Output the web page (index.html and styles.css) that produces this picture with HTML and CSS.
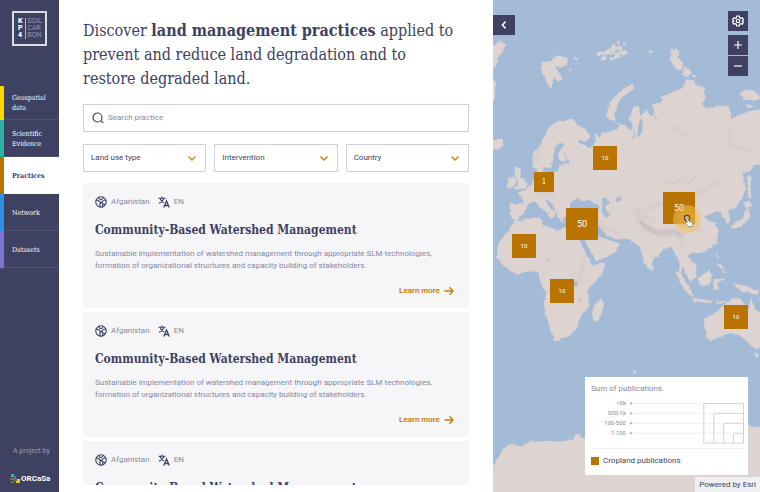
FILE: index.html
```html
<!DOCTYPE html>
<html lang="en">
<head>
<meta charset="utf-8">
<meta name="viewport" content="width=device-width, initial-scale=1">
<title>Soil Carbon – Practices</title>
<link rel="stylesheet" href="styles.css">
</head>
<body>
<svg class="sprite" aria-hidden="true">
  <symbol id="i-globe" viewBox="0 0 24 24"><g fill="none" stroke="currentColor" stroke-width="2.200" stroke-linejoin="round" stroke-linecap="round"><circle cx="12" cy="12" r="10.500"/><path d="M2.500 8l5 1.500 4.500 4.500-2.500 2.500 1 5.500M7.500 2.500l1.500 3.500 4 1.500 3.500-5M21.500 8.500l-4.500 0-3 3.500 2 4 4.500 1M12 14l2-2M16 16l-1.500 6"/></g></symbol>
  <symbol id="i-lang" viewBox="0 0 24 24"><g fill="none" stroke="currentColor" stroke-width="2.200"><path d="M1 4.500h14M8 1v3.500M12 5c-1.500 4-5 7.500-10 9.500M4 5c1.500 4 4 7 8 8.500"/><path d="M11.500 23l5.500-13 5.500 13M13.500 19h7" stroke-width="2.600"/></g></symbol>
  <symbol id="i-chev" viewBox="0 0 10 10"><path d="M1.500 3.500L5 7l3.500-3.500" fill="none" stroke="currentColor" stroke-width="1.500"/></symbol>
  <symbol id="i-arrow" viewBox="0 0 10 10"><path d="M.5 5h8.500M5.500 1.200L9.200 5 5.500 8.800" fill="none" stroke="currentColor" stroke-width="1.300"/></symbol>
</svg>
<div class="app">
  <aside class="sidebar">
    <a class="logo" href="#" aria-label="KP4 Soil Carbon">
      <span class="logo-key"><span>K</span><span>P</span><span>4</span></span>
      <span class="logo-name"><span>SOIL</span><span>CAR</span><span>BON</span></span>
    </a>
    <nav class="nav">
      <a class="nav-item geo" href="#">Geospatial data</a>
      <a class="nav-item sci" href="#">Scientific Evidence</a>
      <a class="nav-item prac active" href="#" aria-current="page">Practices</a>
      <a class="nav-item net" href="#">Network</a>
      <a class="nav-item data" href="#">Datasets</a>
    </nav>
    <div class="credit">
      <span class="credit-by">A project by</span>
      <a class="orcasa" href="#">
        <svg viewBox="0 0 10 10" aria-hidden="true"><path fill="#35b7b2" d="M1 0h3v3H1z"/><path fill="#4a7f9c" d="M4 2h2v3H4z"/><path fill="#9a6a3c" d="M0 4h4v2H0zM1 7h3v2H1z"/><path fill="#3d8f4c" d="M4 5h3v2H4z"/><path fill="#efc51c" d="M7 5h3v4H6V7h1z"/></svg>
        <span>ORCaSa</span>
      </a>
    </div>
  </aside>

  <main class="content">
    <h1>Discover <strong>land management practices</strong> applied to prevent and reduce land degradation and to restore degraded land.</h1>
    <label class="search">
      <svg viewBox="0 0 12 12" aria-hidden="true"><g fill="none" stroke="currentColor" stroke-width="1.200"><circle cx="5.500" cy="5.500" r="4.500"/><path d="M8.700 8.700l2.500 2.500"/></g></svg>
      <input type="search" placeholder="Search practice" aria-label="Search practice">
    </label>
    <div class="filters">
      <div class="filter"><select aria-label="Land use type"><option>Land use type</option></select><svg aria-hidden="true"><use href="#i-chev"/></svg></div>
      <div class="filter"><select aria-label="Intervention"><option>Intervention</option></select><svg aria-hidden="true"><use href="#i-chev"/></svg></div>
      <div class="filter"><select aria-label="Country"><option>Country</option></select><svg aria-hidden="true"><use href="#i-chev"/></svg></div>
    </div>
    <div class="cards">
      <article class="card">
        <div class="meta"><svg aria-hidden="true"><use href="#i-globe"/></svg><span>Afganistan</span><svg aria-hidden="true"><use href="#i-lang"/></svg><span>EN</span></div>
        <h2>Community-Based Watershed Management</h2>
        <p>Sustainable implementation of watershed management through appropriate SLM technologies, formation of organizational structures and capacity building of stakeholders.</p>
        <a class="more" href="#">Learn more<svg aria-hidden="true"><use href="#i-arrow"/></svg></a>
      </article>
      <article class="card">
        <div class="meta"><svg aria-hidden="true"><use href="#i-globe"/></svg><span>Afganistan</span><svg aria-hidden="true"><use href="#i-lang"/></svg><span>EN</span></div>
        <h2>Community-Based Watershed Management</h2>
        <p>Sustainable implementation of watershed management through appropriate SLM technologies, formation of organizational structures and capacity building of stakeholders.</p>
        <a class="more" href="#">Learn more<svg aria-hidden="true"><use href="#i-arrow"/></svg></a>
      </article>
      <article class="card">
        <div class="meta"><svg aria-hidden="true"><use href="#i-globe"/></svg><span>Afganistan</span><svg aria-hidden="true"><use href="#i-lang"/></svg><span>EN</span></div>
        <h2>Community-Based Watershed Management</h2>
      </article>
    </div>
  </main>

  <section class="map" aria-label="Map of publications">
    <svg class="world" viewBox="9 0 801 1476" preserveAspectRatio="xMidYMid slice" aria-hidden="true">
      <defs>
        <filter id="coast" x="-5%" y="-5%" width="110%" height="110%" color-interpolation-filters="sRGB"><feTurbulence type="fractalNoise" baseFrequency=".07" numOctaves="2" seed="4"/><feDisplacementMap in="SourceGraphic" scale="10" xChannelSelector="R" yChannelSelector="G"/></filter>
        <filter id="soft"><feGaussianBlur stdDeviation="4"/></filter>
      </defs>
      <g filter="url(#coast)">
        <g fill="#ddd3d1" stroke="#ddd3d1" stroke-width="3" stroke-linejoin="round">
          <!-- Europe and Asia -->
          <path d="M130 500L128 462 150 440 166 405 180 380 205 362 220 366 243 358 262 374 285 388 300 410 288 424 268 416 262 428 280 438 300 448 308 436 318 426 316 400 328 416 340 402 358 394 378 392 392 380 382 370 408 380 420 396 430 382 420 352 432 322 446 320 450 350 442 386 440 420 456 400 460 372 452 350 468 332 482 350 494 346 488 316 520 302 516 292 545 278 580 262 590 240 612 242 616 258 640 262 645 298 630 312 650 326 690 316 715 320 722 356 750 345 780 335 830 326 830 492 792 493 776 512 756 520 764 560 758 590 735 622 712 632 722 662 712 670 700 648 682 632 664 640 638 648 652 662 674 668 684 692 680 720 660 744 634 758 604 758 592 768 618 800 618 830 602 846 580 802 572 806 578 840 592 862 600 884 580 862 568 820 568 780 554 760 545 738 522 746 494 774 484 790 486 806 474 804 460 778 452 740 434 728 418 716 380 714 350 706 334 694 322 670 300 670 326 712 346 718 360 722 386 732 376 754 345 772 314 784 298 752 276 724 262 690 240 640 226 640 218 664 204 650 192 616 172 598 164 602 180 626 194 638 182 656 176 642 152 620 136 604 112 612 100 640 80 660 62 652 60 614 100 612 98 592 84 580 104 572 122 558 134 538 146 520 140 508z"/>
          <!-- British Isles, Iceland, Greenland -->
          <path d="M74 502L92 506 90 528 106 546 110 562 76 568 88 550 78 530zM56 538l14-6 8 12-8 14-18 4zM9 422l24-2 6 14-18 16-12-2zM9 134l26-8 12 8-12 22-14 16-4 26-8 4zM9 240l6 8-2 50-4 4z"/>
          <!-- Svalbard, Franz Josef Land, Severnaya Zemlya -->
          <path d="M154 188l34-4 12 24 18 30-14 4-12-18-8 34-8 2-12-34-8-16zM188 176l18-8 26 8-2 18-22 8-18-12zM320 162l12-8 6 8-8 6zM338 158l10-4 2 8-8 4zM334 172l12-2 2 8-12 2zM350 150l8-2 4 12-8 4zM362 146l10-12 8 8-4 14-10 4zM372 164l14-8 4 14-14 6zM384 138l12 4-4 10-8-4zM390 156l16-4 6 6-14 8zM382 124l6 2-4 6zM400 128l8 2-4 6zM360 172l12 2-6 6zM254 172l10 2-8 4zM236 208l8 2-6 2zM480 152l8 2-6 4z"/>
          <path d="M542 150l14-4 10 12-2 16 14 14-2 18-12 4-14-16-10-18 6-10zM584 200l12 6 8 16-18 8-6-12zM610 226l6 2-4 4z"/>
          <path d="M350 348L362 306 390 276 428 252 432 264 400 284 382 312 370 344 376 360 362 360zM754 282l14-12 24 4 18 16v8l-50 0zM770 314l12 0 2 8-12 0z"/>
          <!-- Africa, Madagascar -->
          <path d="M76 666L110 658 150 654 158 676 200 694 224 684 266 694 270 726 288 764 304 798 347 788 336 818 314 844 290 872 297 918 272 946 262 980 238 1008 196 1018 184 994 174 960 162 914 170 880 150 836 146 814 110 812 82 822 44 798 22 772 26 732 46 704z"/>
          <path d="M314 916l20-20 8 14-18 54-12 2-4-26z"/>
          <!-- Sri Lanka and the Malay archipelago -->
          <path d="M482 798l8 8-6 6zM558 818l14 8 26 40 12 22-14-6-26-38zM608 896l24 2 32 6 0 4-54-6zM624 836l34-24 8 12-10 30-22 4zM672 842l32-6-24 12 6 20-8-6-6 8zM680 906l28-2-26 6zM732 852l18 4 22 4 30 14v10l-30-8-20-2-8-12zM678 760l8 16M684 792l14 8-6 8zM700 806l6 10-6 0zM676 722l6 4-4 10-6-6z"/>
          <!-- Japan, Sakhalin -->
          <path d="M724 678l16-12 20-10 8-26 8-4 2 28-20 20-32 10zM764 606l18 4 2 8-16 4zM774 530l6 0 2 64-8-4z"/>
          <!-- Australia -->
          <path d="M645 984L642 958 678 940 706 912 734 894 758 904 768 930 780 924 782 894 794 930 830 950 830 1046 794 1044 776 1026 746 1004 720 998 690 1008 664 1020 650 1012zM794 1060l10 2-4 10z"/>
          <!-- Antarctica -->
          <path d="M-10 1490L6 1404 26 1376 34 1358 54 1336 74 1332 94 1342 120 1328 160 1324 220 1326 252 1320 262 1300 278 1316 520 1294 700 1280 780 1276 830 1292 830 1490zM430 1112l8 4-6 4zM194 1016l14 4z"/>
        </g>
        <g fill="#a3bbd6">
          <path d="M158 500L184 506 190 470 196 440 214 428 222 434 204 460 206 482 236 482 238 492 208 494 200 514 178 518 156 514z"/>
          <path d="M240 606L262 596 278 604 296 600 326 616 330 628 240 630zM330 598l18-6 8 18-10 10 14 24-14 10-12-22 4-16zM380 594l8-6 8 12-12 6zM270 704l10 10 38 68-8 4-42-68zM324 676l26 30-4 4-26-24zM252 844h10l0 12-12 2zM168 774l8 2-2 8zM266 884l6 20-4 2z"/>
        </g>
        <g fill="none" stroke="#a3bbd6" stroke-width="3"><path d="M434 392l-6 26M494 350l8 14M222 458l12 26"/><path d="M598 548q14-6 22-28" stroke-width="2"/></g>
      </g>
      <g fill="none" stroke="#b3a8a9" stroke-width="8" opacity=".22" filter="url(#soft)">
        <path d="M428 636l40-6 32-14 50-22 70 4M440 650l24 36 50 22 50-6 22 50M432 640l60 20M524 550l40-4 36-18M136 590l20-10 40 4M300 640l34 40 50 20M540 378l50 30M716 380l4 50 60 24M690 540l-40 30-50 10M150 420l-14 60M284 774l-10 50-20 40M600 690l40-6"/>
      </g>
      <path d="M450 664q46 46 100 28l30 16" fill="none" stroke="#a89da0" stroke-width="7" opacity=".55" filter="url(#soft)"/>
    </svg>

    <button class="pin small p1" type="button">1</button>
    <button class="pin medium p2" type="button">10</button>
    <button class="pin large p3" type="button">50</button>
    <button class="pin large p4" type="button">50</button>
    <button class="pin medium p5" type="button">10</button>
    <button class="pin medium p6" type="button">10</button>
    <button class="pin medium p7" type="button">10</button>
    <svg class="pointer" viewBox="0 0 28 28" aria-hidden="true"><circle cx="14" cy="14" r="14" fill="#f2c060" opacity=".5"/><circle cx="14" cy="14" r="10" fill="#f5b820" opacity=".25"/><circle cx="14" cy="13" r="2.600" fill="#f5c13c" stroke="#45475c" stroke-width="1.200"/><path d="M13.500 14q1-1 1.800.4l1 2.200 2 .4q1.500.5 1.200 2l-.6 2.600h-3.600l-3-3.500q0-1.300 1.300-.8l.8.6z" fill="#fff" stroke="#777a8c" stroke-width=".7"/></svg>

    <button class="tool collapse" type="button" aria-label="Collapse panel"><svg viewBox="0 0 10 10"><path d="M6.700 1.500L3.300 5l3.400 3.500" fill="none" stroke="currentColor" stroke-width="1.500"/></svg></button>
    <div class="tools">
      <button class="tool" type="button" aria-label="Settings"><svg viewBox="0 0 24 24"><g fill="none" stroke="currentColor" stroke-width="2.400" stroke-linejoin="round"><path d="M9.500 2h5l.8 3.500 2 1.200 3.400-1 2.300 4-2.500 2.300 2.500 2.300-2.300 4-3.400-1-2 1.200-.8 3.500h-5l-.8-3.500-2-1.200-3.400 1-2.300-4L3.500 12 1 9.700l2.300-4 3.400 1 2-1.200z"/><circle cx="12" cy="12" r="3.500"/></g></svg></button>
      <div class="zoom">
        <button class="tool" type="button" aria-label="Zoom in"><svg viewBox="0 0 10 10"><path d="M5 1v8M1 5h8" stroke="currentColor" stroke-width="1.200"/></svg></button>
        <button class="tool" type="button" aria-label="Zoom out"><svg viewBox="0 0 10 10"><path d="M1 5h8" stroke="currentColor" stroke-width="1.200"/></svg></button>
      </div>
    </div>

    <div class="legend">
      <div class="legend-title">Sum of publications.</div>
      <div class="scale">
        <ul><li>&lt;5k</li><li>500-1k</li><li>100-500</li><li>1-100</li></ul>
        <svg viewBox="0 0 116 47" preserveAspectRatio="xMaxYMin meet" aria-hidden="true">
          <g stroke="#eeeef3"><path d="M3 5.500h70M3 15.500h80M3 25.500h90M3 35.500h100"/></g>
          <g fill="#b9bacb"><circle cx="2" cy="5.500" r="1.200"/><circle cx="2" cy="15.500" r="1.200"/><circle cx="2" cy="25.500" r="1.200"/><circle cx="2" cy="35.500" r="1.200"/></g>
          <g fill="none" stroke="#cfd0da"><path d="M75.500 5.500h40v40h-40zM85.500 45.500v-30h30M95.500 45.500v-20h20M105.500 45.500v-10h10"/></g>
        </svg>
      </div>
      <div class="legend-key"><span class="swatch"></span>Cropland publications</div>
    </div>
    <div class="powered">Powered by Esri</div>
  </section>
</div>
</body>
</html>
```

FILE: styles.css
```css
:root {
  --navy: #3e4162;
  --muted: #8588a3;
  --ochre: #b97400;
  --slab: "Roboto Slab", "DejaVu Serif Condensed", "DejaVu Serif", serif;
}
* { box-sizing: border-box; }
body { margin: 0; font: 8px/12px Roboto, "Liberation Sans", sans-serif; color: var(--navy); background: #fff; }
button, input, select { font: inherit; color: inherit; border: 0; border-radius: 0; padding: 0; margin: 0; background: none; }
a { color: inherit; text-decoration: none; }
.sprite { position: absolute; width: 0; height: 0; }

.app { display: grid; grid-template-columns: 59px 13fr 8fr; height: 100vh; overflow: hidden; }

.sidebar { display: flex; flex-direction: column; background: var(--navy); color: #fff; }
.logo { display: flex; gap: 2px; width: 35px; height: 35px; margin: 11px 12px 40px; padding: 5px 2px 5px 4px; border: 2px solid #d9dae2; font-size: 7px; line-height: 7px; }
.logo span span { display: block; }
.logo-key { font-weight: 900; }
.logo-name { border-left: 1px solid #b5b7c8; padding-left: 2px; color: #b5b7c8; font-weight: 300; }
.nav-item { display: flex; align-items: center; height: 37px; padding: 0 8px; border-left: 4px solid; box-shadow: inset 0 -1px #50536f; font-family: var(--slab); font-size: 7px; line-height: 10px; font-weight: 500; }
.nav-item:first-child { height: 34px; }
.geo { border-left-color: #ffd400; }
.sci { border-left-color: #29b1a1; }
.prac { border-left-color: #b97400; }
.net { border-left-color: #318fe6; }
.data { border-left-color: #7b72d2; }
.active { background: #fff; color: var(--navy); box-shadow: none; font-weight: 600; }
.credit { margin-top: auto; padding: 0 8px 7px; display: flex; flex-direction: column; gap: 16px; }
.credit-by { padding-left: 5px; font-size: 7px; color: #9a9cb4; }
.orcasa { display: flex; align-items: center; gap: 1px; padding-left: 2px; font: bold 8px/12px Roboto, sans-serif; }
.orcasa svg { flex: none; width: 10px; height: 10px; }

.content { display: flex; flex-direction: column; min-width: 0; padding: 19px 24px 7px; overflow: hidden; }
h1 { margin: 0 0 13px; padding-right: 12px; font: 400 16px/24px var(--slab); }
.search { display: flex; flex: none; align-items: center; gap: 4px; height: 28px; padding: 0 8px; border: 1px solid #cfd0da; }
.search svg { width: 12px; height: 12px; }
.search input { flex: 1; outline: 0; }
.search input::placeholder { color: var(--muted); opacity: 1; }
.filters { display: grid; flex: none; grid-template-columns: repeat(3, 1fr); gap: 8px; margin: 12px 0 11px; }
.filter { display: grid; align-items: center; height: 28px; border: 1px solid #cfd0da; }
.filter > * { grid-area: 1 / 1; }
.filter select { appearance: none; width: 100%; height: 100%; padding: 0 7px; }
.filter svg { justify-self: end; width: 10px; height: 10px; margin-right: 8px; color: #c8860f; pointer-events: none; }
.cards { display: flex; flex: 1; flex-direction: column; gap: 4px; min-height: 0; overflow: hidden; }
.card { display: flex; flex: none; flex-direction: column; padding: 13px 12px 11px; background: #f6f6f9; }
.meta { display: flex; align-items: center; gap: 4px; color: var(--muted); }
.meta svg { width: 12px; height: 12px; color: var(--navy); }
.meta span { margin-right: 4px; }
h2 { margin: 14px 0 10px; font: 700 12px/16px var(--slab); }
.card p { margin: 0; color: var(--muted); }
.more { display: flex; align-items: center; align-self: flex-end; gap: 4px; margin: 13px 3px 0 0; color: #c57c00; font-weight: 600; }
.more svg { width: 10px; height: 10px; }

.map { position: relative; overflow: hidden; background: #a3bbd6; }
.world { display: block; width: 100%; height: 100%; }
.pin { position: absolute; background: var(--ochre); color: #fff; }
.small { width: 20px; height: 20px; font-family: var(--slab); font-size: 8px; }
.medium { width: 24px; height: 24px; font-size: 6px; }
.large { width: 32px; height: 32px; font-size: 9px; }
.p1 { left: 41px; top: 172px; }
.p2 { left: 100px; top: 146px; }
.p3 { left: 73px; top: 208px; }
.p4 { left: 170px; top: 192px; }
.p5 { left: 19px; top: 234px; }
.p6 { left: 57px; top: 279px; }
.p7 { left: 231px; top: 305px; }
.pointer { position: absolute; left: 180px; top: 205px; width: 28px; height: 28px; pointer-events: none; }
.tool { display: grid; place-items: center; width: 20px; height: 20px; background: var(--navy); color: #fff; }
.tool svg { width: 10px; height: 10px; }
.collapse { position: absolute; left: 0; top: 15px; width: 22px; }
.tools { position: absolute; right: 12px; top: 11px; display: grid; gap: 4px; }
.zoom { display: grid; gap: 1px; }
.tools > .tool svg { width: 12px; height: 12px; }
.legend { position: absolute; right: 12px; bottom: 17px; width: 163px; padding: 6px 4px 8px 6px; background: #fff; }
.legend-title { color: var(--muted); }
.scale { display: flex; gap: 3px; margin-top: 3px; padding-bottom: 3px; border-bottom: 1px solid #f1f1f5; }
.scale ul { flex: none; width: 35px; margin: 0; padding: 0; list-style: none; text-align: right; font-size: 6px; line-height: 10px; color: var(--muted); }
.scale svg { flex: 1; min-width: 0; height: 47px; overflow: visible; }
.legend-key { display: flex; align-items: center; gap: 4px; margin-top: 6px; }
.swatch { width: 8px; height: 8px; background: var(--ochre); }
.powered { position: absolute; right: 0; bottom: 0; padding: 2px 4px 1px; background: #f0f0f3; }
```
